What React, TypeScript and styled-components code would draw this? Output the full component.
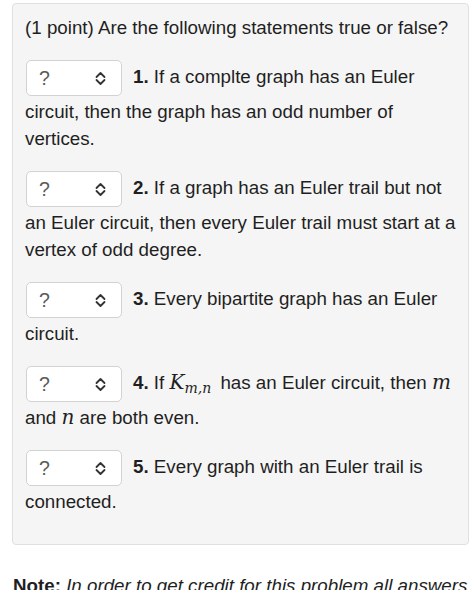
import React from 'react';
import styled, { createGlobalStyle } from 'styled-components';

const GlobalStyle = createGlobalStyle`
  html, body {
    margin: 0;
    padding: 0;
    background: #ffffff;
  }
  body {
    font-family: "Liberation Sans", Arial, Helvetica, sans-serif;
    color: #1f1f1f;
    overflow: hidden;
  }
`;

const Page = styled.div`
  width: 474px;
  height: 590px;
  box-sizing: border-box;
  padding: 3px 5px 0 12px;
  overflow: hidden;
`;

const Panel = styled.div`
  background: #f5f5f5;
  border: 1px solid #e0e0e0;
  border-radius: 4px;
  padding: 10px 6px 29px 12px;
  font-size: 18.75px;
  line-height: 27px;
`;

const Para = styled.p`
  margin: 0 0 17px;

  &:last-child {
    margin-bottom: 0;
  }
`;

const Select = styled.span`
  display: inline-flex;
  align-items: center;
  justify-content: space-between;
  box-sizing: border-box;
  width: 96px;
  height: 36px;
  margin: 2px 11px 2px 1px;
  padding: 0 15px 0 12px;
  vertical-align: middle;
  background: #ffffff;
  border: 1px solid #d2d2d2;
  border-radius: 5px;
  color: #5a5a5a;
  font-size: 19.5px;
`;

const Num = styled.b`
  font-weight: bold;
`;

const MathVar = styled.span<{ $size?: number }>`
  font-family: "DejaVu Serif", "Liberation Serif", serif;
  font-style: italic;
  font-size: ${({ $size }) => $size ?? 20}px;
  line-height: 1;
`;

const Sub = styled.sub`
  font-family: "DejaVu Serif", "Liberation Serif", serif;
  font-style: italic;
  font-size: 14px;
  line-height: 0;
  vertical-align: -4px;
  padding-right: 4px;
`;

const Note = styled.p`
  margin: 27px 0 0 1px;
  font-size: 18.75px;
  line-height: 27px;

  em {
    font-style: italic;
  }
`;

const Chevrons = () => (
  <svg width="11" height="15" viewBox="0 0 11 15" fill="none">
    <path d="M1.5 6 L5.5 2 L9.5 6" stroke="#333333" strokeWidth="1.8" strokeLinecap="round" strokeLinejoin="round" />
    <path d="M1.5 9 L5.5 13 L9.5 9" stroke="#333333" strokeWidth="1.8" strokeLinecap="round" strokeLinejoin="round" />
  </svg>
);

const AnswerSelect = () => (
  <Select role="listbox" aria-label="answer">
    <span>?</span>
    <Chevrons />
  </Select>
);

export default function App() {
  return (
    <>
      <GlobalStyle />
      <Page>
        <Panel>
          <Para>(1 point) Are the following statements true or false?</Para>
          <Para>
            <AnswerSelect />
            <Num>1.</Num> If a complte graph has an Euler circuit, then the graph has an odd number of vertices.
          </Para>
          <Para>
            <AnswerSelect />
            <Num>2.</Num> If a graph has an Euler trail but not an Euler circuit, then every Euler trail must start at a vertex of odd degree.
          </Para>
          <Para>
            <AnswerSelect />
            <Num>3.</Num> Every bipartite graph has an Euler circuit.
          </Para>
          <Para>
            <AnswerSelect />
            <Num>4.</Num> If <MathVar>K</MathVar>
            <Sub>m,n</Sub> has an Euler circuit, then <MathVar>m</MathVar> and <MathVar>n</MathVar> are both even.
          </Para>
          <Para>
            <AnswerSelect />
            <Num>5.</Num> Every graph with an Euler trail is connected.
          </Para>
        </Panel>
        <Note>
          <b>Note:</b> <em>In order to get credit for this problem all answers must be correct.</em>
        </Note>
      </Page>
    </>
  );
}
